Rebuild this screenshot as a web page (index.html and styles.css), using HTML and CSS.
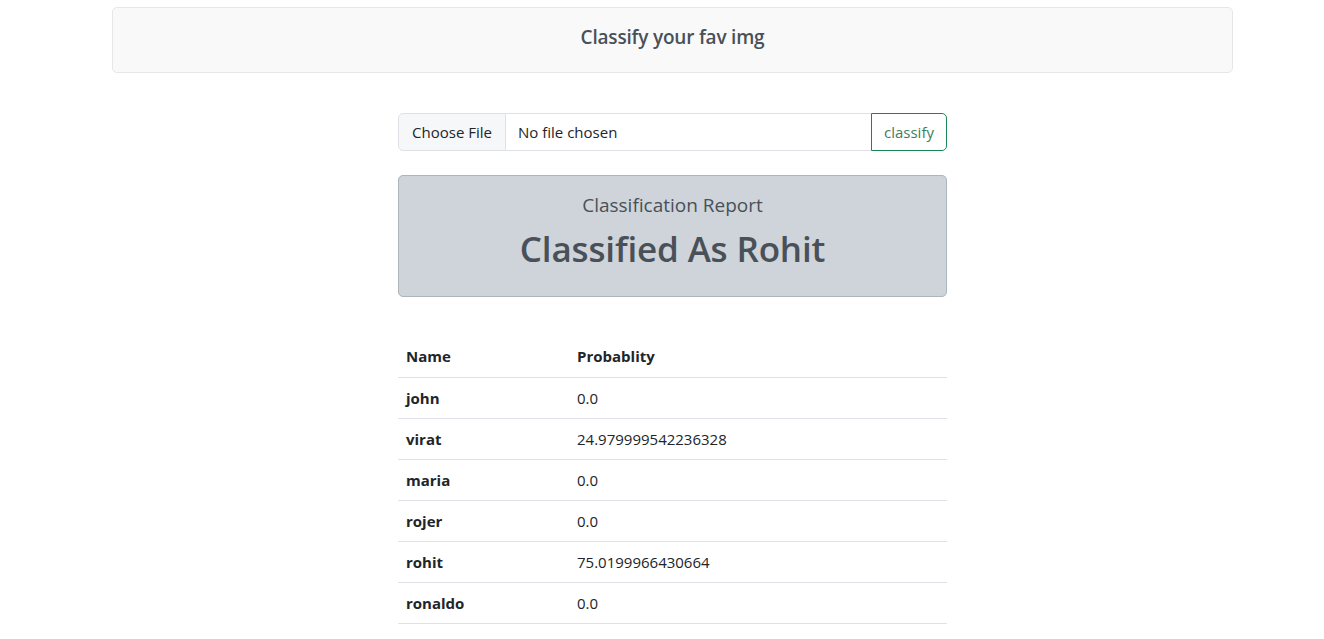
FILE: index.html
```html
<!DOCTYPE html>
<html lang="en">
<head>
<meta charset="utf-8">
<title>Classify your fav img</title>
<link rel="stylesheet" href="styles.css">
</head>
<body>
<div class="page">
  <header class="topbar">
    <h5 class="topbar-title">Classify your fav img</h5>
  </header>
  <main class="content">
    <form class="upload">
      <label class="file-btn">Choose File</label>
      <span class="file-name">No file chosen</span>
      <button type="button" class="classify-btn">classify</button>
    </form>
    <section class="report">
      <div class="report-sub">Classification Report</div>
      <h1 class="report-title">Classified As Rohit</h1>
    </section>
    <table class="results">
      <thead>
        <tr><th class="col-name">Name</th><th>Probablity</th></tr>
      </thead>
      <tbody>
        <tr><th>john</th><td>0.0</td></tr>
        <tr><th>virat</th><td>24.979999542236328</td></tr>
        <tr><th>maria</th><td>0.0</td></tr>
        <tr><th>rojer</th><td>0.0</td></tr>
        <tr><th>rohit</th><td>75.0199966430664</td></tr>
        <tr><th>ronaldo</th><td>0.0</td></tr>
      </tbody>
    </table>
  </main>
</div>
</body>
</html>
```

FILE: styles.css
```css
* { box-sizing: border-box; }
html, body { margin: 0; padding: 0; background: #fff; }
body {
  font-family: "Open Sans", "Noto Sans", sans-serif;
  color: #212529;
  font-size: 15px;
}
.page {
  width: 1121px;
  margin-left: 112px;
  padding-top: 7px;
}
.topbar {
  height: 66px;
  padding-bottom: 6px;
  background: #f9f9f9;
  border: 1px solid #e6e6e6;
  border-radius: 5px;
  display: flex;
  align-items: center;
  justify-content: center;
}
.topbar-title {
  margin: 0;
  font-size: 19px;
  font-weight: 600;
  color: #495057;
  letter-spacing: -0.2px;
}
.content {
  width: 549px;
  margin: 40px auto 0;
  display: flex;
  flex-direction: column;
}
.upload {
  display: flex;
  height: 38px;
  margin: 0;
}
.file-btn {
  width: 108px;
  display: flex;
  align-items: center;
  justify-content: center;
  background: #f6f7f8;
  border: 1px solid #dee2e6;
  border-radius: 5px 0 0 5px;
  font-size: 15px;
  color: #212529;
}
.file-name {
  flex: 1;
  display: flex;
  align-items: center;
  padding-left: 12px;
  border-top: 1px solid #dee2e6;
  border-bottom: 1px solid #dee2e6;
  font-size: 15px;
}
.classify-btn {
  width: 76px;
  background: #fff;
  border: 1px solid #198754;
  border-radius: 0 5px 5px 0;
  color: #3d8060;
  font-family: inherit;
  font-size: 15px;
  padding: 0;
}
.report {
  margin-top: 24px;
  height: 122px;
  background: #ced4da;
  border: 1px solid #adb5bd;
  border-radius: 5px;
  display: flex;
  flex-direction: column;
  align-items: center;
  color: #495057;
}
.report-sub {
  margin-top: 17px;
  font-size: 19px;
  line-height: 24px;
}
.report-title {
  margin: 8px 0 0;
  font-size: 35px;
  line-height: 48px;
  font-weight: 600;
  letter-spacing: -0.15px;
}
.results {
  margin-top: 39px;
  width: 100%;
  border-collapse: collapse;
}
.results th, .results td {
  height: 41px;
  padding: 0 8px;
  text-align: left;
  vertical-align: middle;
  border-bottom: 1px solid #dee2e6;
  font-size: 15px;
}
.results th { font-weight: 700; }
.results td { font-weight: 400; }
.col-name { width: 171px; }
```
